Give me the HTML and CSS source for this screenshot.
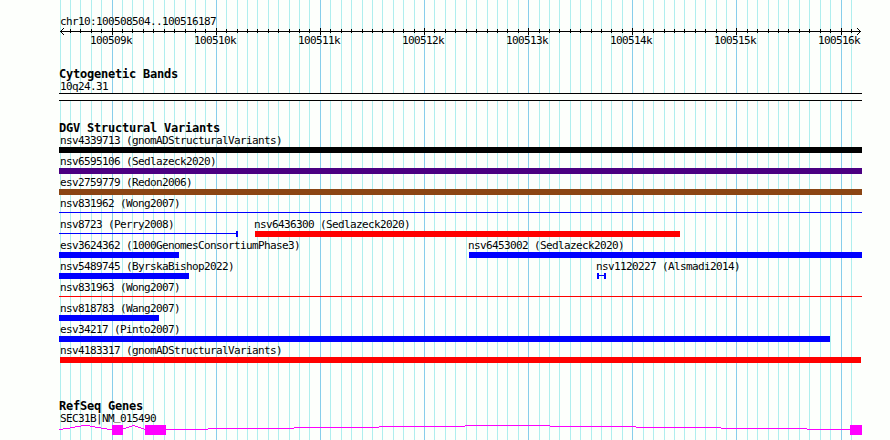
FILE: index.html
```
<!DOCTYPE html>
<html lang="en">
<head>
    <meta charset="UTF-8">
    <title>chr10:100508504..100516187</title>
    <link rel="stylesheet" href="styles.css">
</head>
<body>
    <div class="browser">
        <svg class="grid" id="grid" width="890" height="440" shape-rendering="crispEdges"></svg>

        <div class="ruler">
            <div class="label">chr10:100508504..100516187</div>
            <svg class="axis" id="axis" width="803" height="8" shape-rendering="crispEdges"></svg>
            <div class="ticks">
                <span>100509k</span><span>100510k</span><span>100511k</span><span>100512k</span><span>100513k</span><span>100514k</span><span>100515k</span><span>100516k</span>
            </div>
        </div>

        <div class="track bands">
            <h2>Cytogenetic Bands</h2>
            <div class="label">10q24.31</div>
            <div class="band"></div>
        </div>

        <div class="track variants">
            <h2>DGV Structural Variants</h2>
            <div class="row"><div class="feature full"><div class="label">nsv4339713 (gnomADStructuralVariants)</div><div class="bar black"></div></div></div>
            <div class="row"><div class="feature full"><div class="label">nsv6595106 (Sedlazeck2020)</div><div class="bar purple"></div></div></div>
            <div class="row"><div class="feature full"><div class="label">esv2759779 (Redon2006)</div><div class="bar brown"></div></div></div>
            <div class="row"><div class="feature full"><div class="label">nsv831962 (Wong2007)</div><div class="bar line blue"></div></div></div>
            <div class="row">
                <div class="feature" style="width: 179px"><div class="label">nsv8723 (Perry2008)</div><div class="bar line blue cap-right"></div></div>
                <div class="feature" style="width: 425px; margin-left: 17px"><div class="label shift">nsv6436300 (Sedlazeck2020)</div><div class="bar red"></div></div>
            </div>
            <div class="row">
                <div class="feature" style="width: 120px"><div class="label">esv3624362 (1000GenomesConsortiumPhase3)</div><div class="bar blue"></div></div>
                <div class="feature" style="width: 393px; margin-left: 290px"><div class="label shift">nsv6453002 (Sedlazeck2020)</div><div class="bar blue"></div></div>
            </div>
            <div class="row">
                <div class="feature" style="width: 130px"><div class="label">nsv5489745 (ByrskaBishop2022)</div><div class="bar blue"></div></div>
                <div class="feature" style="width: 9px; margin-left: 408px"><div class="label shift">nsv1120227 (Alsmadi2014)</div><div class="bar line blue cap-left cap-right"></div></div>
            </div>
            <div class="row"><div class="feature full"><div class="label">nsv831963 (Wong2007)</div><div class="bar line red"></div></div></div>
            <div class="row"><div class="feature" style="width: 100px"><div class="label">nsv818783 (Wang2007)</div><div class="bar blue"></div></div></div>
            <div class="row"><div class="feature" style="width: 771px"><div class="label">esv34217 (Pinto2007)</div><div class="bar blue"></div></div></div>
            <div class="row"><div class="feature full"><div class="label">nsv4183317 (gnomADStructuralVariants)</div><div class="bar red inset"></div></div></div>
        </div>

        <div class="track genes">
            <h2>RefSeq Genes</h2>
            <div class="label">SEC31B|NM<span class="underscore">_</span>015490</div>
            <svg class="gene" width="803" height="10" shape-rendering="crispEdges">
                <!-- introns -->
                <g fill="none" stroke="#ff00ff">
                    <path d="M0 4.5H4M4 3.5H11M11 2.5H16M16 1.5H22M22 .5H31M31 1.5H36M36 2.5H42M42 3.5H48M48 4.5H53"/>
                    <path d="M64 3.5H67M67 2.5H70M70 1.5H73M73 .5H76M76 1.5H79M79 2.5H82M82 3.5H85M85 4.5H86"/>
                    <path d="M107 4.5H149M149 3.5H235M235 2.5H320M320 1.5H406M406 .5H491M491 1.5H577M577 2.5H662M662 3.5H748M748 4.5H792"/>
                </g>
                <!-- exons -->
                <path d="M53 0h11v10h-11zM86 0h21v10h-21zM791 0h12v10h-12z" fill="#ff00ff"/>
            </svg>
        </div>
    </div>

    <script>
        const start = 8504;
        const scale = 800 / 7683;
        const left = 59;
        const grid = document.getElementById('grid');
        const axis = document.getElementById('axis');

        function addRect(svg, x, y, w, h, color) {
            const r = document.createElementNS('http://www.w3.org/2000/svg', 'rect');
            r.setAttribute('x', x);
            r.setAttribute('y', y);
            r.setAttribute('width', w);
            r.setAttribute('height', h);
            r.setAttribute('fill', color);
            svg.appendChild(r);
        }

        addRect(axis, 1, 3, 801, 1, '#000');
        for (let bp = 8500; bp <= 16100; bp += 100) {
            const x = Math.round(60 + (bp - start) * scale);
            const major = bp % 1000 === 0;
            addRect(grid, x, 0, 1, 440, major ? '#87ceeb' : '#afeeee');
            if (bp > 8500) {
                addRect(axis, x - left, major ? 0 : 1, 1, major ? 7 : 4, '#000');
            }
        }

        // arrow heads
        for (let i = 1; i < 4; i++) {
            addRect(axis, 1 + i, 3 - i, 1, 1, '#000');
            addRect(axis, 1 + i, 3 + i, 1, 1, '#000');
            addRect(axis, 801 - i, 3 - i, 1, 1, '#000');
            addRect(axis, 801 - i, 3 + i, 1, 1, '#000');
        }
    </script>
</body>
</html>
```
FILE: styles.css
```
* {
    box-sizing: border-box;
}

body {
    margin: 0;
    background-color: #fdfffc;
    color: #000;
    overflow: hidden;
}

.browser {
    position: relative;
    width: 890px;
    height: 440px;
    padding: 15px 28px 0 59px;
    overflow: hidden;
}

.grid {
    position: absolute;
    left: 0;
    top: 0;
    z-index: -1;
}

svg {
    display: block;
}

.label,
.ticks {
    font-family: "DejaVu Sans Mono", monospace;
    font-size: 11px;
    line-height: 13px;
    height: 13px;
    letter-spacing: -0.623px;
    white-space: nowrap;
}

.label {
    padding-left: 1px;
}

.shift {
    padding-left: 0;
    margin-left: -1px;
}

.underscore {
    vertical-align: 2px;
    line-height: 0;
}

h2 {
    margin: 0;
    height: 12px;
    font: bold 12px/12px "DejaVu Sans Mono", monospace;
    letter-spacing: -0.225px;
    white-space: nowrap;
}

.ticks {
    display: flex;
    gap: 62px;
    padding-left: 31px;
    margin-top: -2px;
}

.ticks span {
    width: 42px;
}

.ruler {
    height: 53px;
}

.bands {
    height: 54px;
}

.band {
    height: 8px;
    border: solid #000;
    border-width: 1px 0;
    background-color: #fdfffc;
}

.variants {
    height: 278px;
}

.row {
    display: flex;
    height: 21px;
}

.feature {
    flex: none;
}

.full {
    width: 803px;
}

.bar {
    height: 6px;
}

.black { background-color: #000; }
.purple { background-color: #4b0082; }
.brown { background-color: #8b4513; }
.blue { background-color: #00f; }
.red { background-color: #f00; }

.line {
    background-clip: content-box;
    padding: 2px 0 3px;
}

.cap-right {
    border-right: 2px solid #00f;
}

.cap-left {
    border-left: 2px solid #00f;
}

.inset {
    margin: 0 1px;
}
```
